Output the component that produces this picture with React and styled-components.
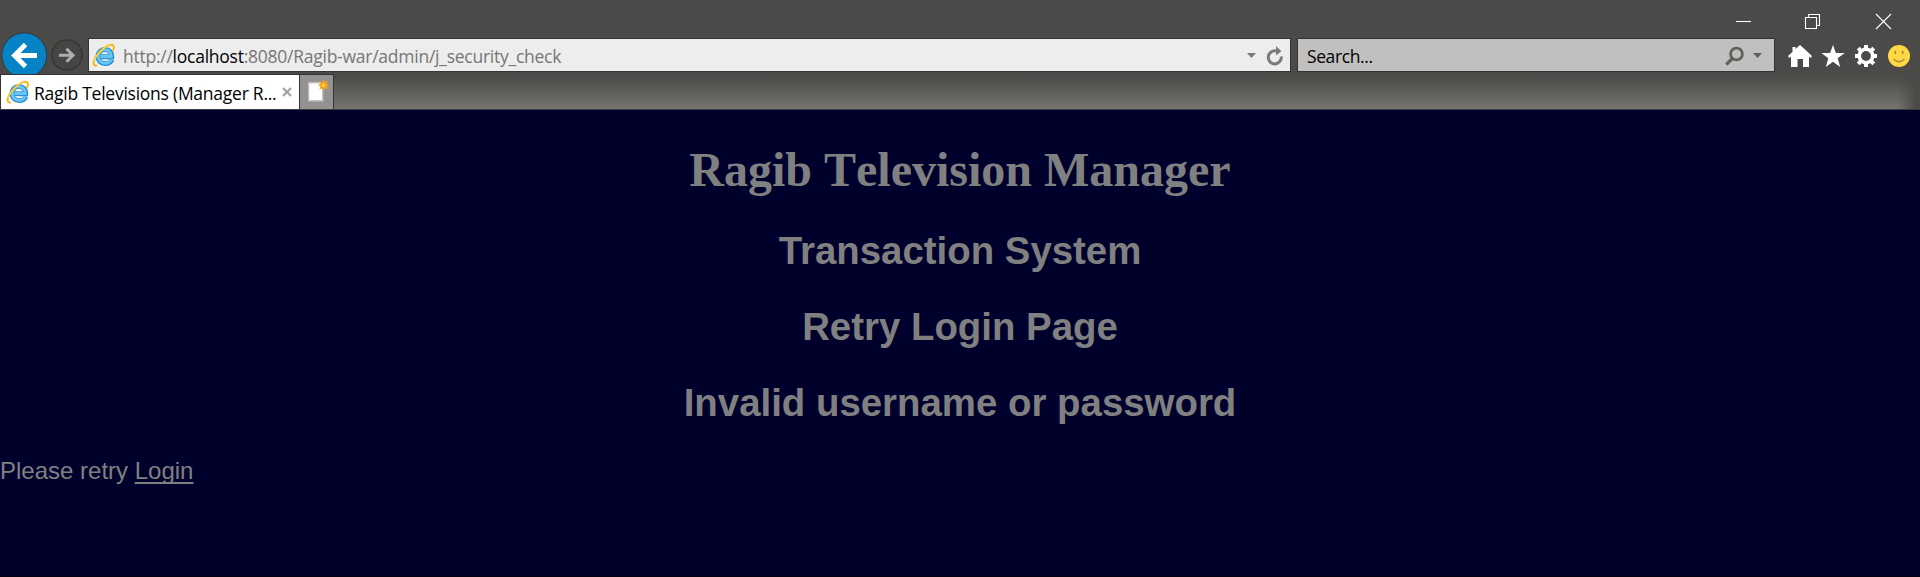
import React from "react";
import styled, { createGlobalStyle } from "styled-components";

const Global = createGlobalStyle`
  * { box-sizing: border-box; }
  html, body { margin: 0; padding: 0; background: #00002d; }
  body { overflow: hidden; }
  svg { display: block; flex: none; }
`;

const Browser = styled.div`
  display: flex;
  flex-direction: column;
  width: 1920px;
  height: 577px;
  background: #4c4a48;
  font-family: "Open Sans", "Noto Sans", sans-serif;
  font-size: 17.5px;
  letter-spacing: -0.25px;
  color: #000;
`;

const TitleBar = styled.header`
  display: flex;
  justify-content: flex-end;
  align-items: flex-start;
  height: 38px;
  padding: 13px 28px 0 0;
  gap: 52px;
`;

const WindowButton = styled.button`
  display: flex;
  width: 17px;
  height: 17px;
  margin-right: ${(p) => p.$gap || 0}px;
  padding: 0;
  border: 0;
  background: none;
`;

const NavBar = styled.div`
  display: flex;
  align-items: flex-start;
  height: 36px;
`;

const RoundButtons = styled.div`
  display: flex;
  align-items: center;
  gap: 4px;
  width: 88px;
  height: 46px;
  margin-top: -6px;
  padding-left: 1px;
`;

const Field = styled.div`
  display: flex;
  align-items: center;
  width: ${(p) => p.$width}px;
  height: 34px;
  margin-right: ${(p) => p.$gap}px;
  padding: 0 ${(p) => p.$right}px 0 ${(p) => p.$left}px;
  border: 1px solid #353432;
  background: ${(p) => p.$fill};
`;

const Url = styled.span`
  flex: 1;
  margin-left: 7px;
  padding-top: 2px;
  line-height: 30px;
  color: #767676;
  white-space: pre;
`;

const Host = styled.span`
  color: #000;
`;

const SearchHint = styled.span`
  flex: 1;
  padding-top: 2px;
  line-height: 30px;
  letter-spacing: -0.4px;
`;

const Tools = styled.div`
  display: flex;
  gap: 9px;
  padding-top: 7px;
`;

const TabRow = styled.div`
  position: relative;
  display: flex;
  height: 36px;
  border-bottom: 1px solid #3d3c3c;
  background:
    linear-gradient(90deg, transparent 1898px, #4c4a48 1916px),
    linear-gradient(180deg, #4c4a48 2px, #757370 34px);
`;

const Tab = styled.div`
  display: flex;
  align-items: center;
  width: 300px;
  padding: 0 7px 0 5px;
  border: 1px solid #353432;
  border-bottom: 0;
  background: #fff;
`;

const TabTitle = styled.span`
  flex: 1;
  margin-left: 4px;
  padding-top: 2px;
  line-height: 30px;
  white-space: nowrap;
`;

const NewTab = styled.button`
  display: flex;
  width: 34px;
  padding: 5px 0 0 6px;
  border: 1px solid #353432;
  border-width: 1px 1px 0 0;
  background: #939290;
`;

const Page = styled.main`
  flex: 1;
  background: #00002d;
  border-bottom: 1px solid #000012;
  color: #808080;
  font-family: "Liberation Sans", Arial, sans-serif;
  font-size: 24px;
  letter-spacing: 0;
`;

const Title = styled.h1`
  margin: 32px 0 0;
  font: bold 48px/55px "Liberation Serif", "Times New Roman", serif;
  font-kerning: none;
  text-align: center;
`;

const Subtitle = styled.h2`
  margin: 32px 0 0;
  font-size: 38.4px;
  line-height: 44px;
  text-align: center;
`;

const Notice = styled.p`
  margin: 32px 0 0;
  line-height: 28px;
`;

const LoginLink = styled.a`
  color: inherit;
  text-decoration: underline;
  text-decoration-skip-ink: none;
  text-decoration-thickness: 2px;
  text-underline-offset: 3px;
`;

const IeLogo = () => (
  <svg width="24" height="24" viewBox="0 0 24 24" fill="none">
    <path d="M20 16.500C18.600 19.500 16 20.600 12.900 20.600C8.900 20.600 6 17.600 6 13.600C6 9.600 8.900 6.400 12.900 6.400C17.200 6.400 19.900 9.400 19.700 13.800H8.500" stroke="#2b8fd3" strokeWidth="5" />
    <path d="M19.300 16.300C18 19 15.700 20.200 12.900 20.200C9.100 20.200 6.400 17.400 6.400 13.600C6.400 9.700 9.100 6.800 12.900 6.800C16.800 6.800 19.300 9.300 19.200 13.500H8.500" stroke="#66c5f2" strokeWidth="3" />
    <path d="M4.300 22.500C1.200 22.800 .8 19.500 3 15.300C6 9.500 13.500 2.500 19 1.700C22.300 1.300 22.500 4.200 21.200 7.300" stroke="#f5b91d" strokeWidth="2" strokeLinecap="round" />
    <path d="M2.100 18.500C3 13 11.500 3.800 18 2" stroke="#ffe36a" strokeWidth=".8" />
  </svg>
);

const Caret = ({ color }) => (
  <svg width="9" height="5" viewBox="0 0 9 5"><path d="M0 0h9L4.500 5z" fill={color} /></svg>
);

const BackIcon = () => (
  <svg width="46" height="46" viewBox="0 0 46 46" fill="none">
    <circle cx="23.300" cy="23.300" r="22.500" fill="#0683c6" stroke="#353432" />
    <path d="M36 23.500H14M24.500 12.500L13.500 23.500L24.500 34.500" stroke="#fff" strokeWidth="4.800" />
  </svg>
);

const ForwardIcon = () => (
  <svg width="32" height="32" viewBox="0 0 32 32" fill="none">
    <circle cx="16" cy="16" r="15.200" fill="#474543" stroke="#353432" strokeWidth="1.200" />
    <path d="M8 16.300H22M15.500 9.800L22 16.300L15.500 22.800" stroke="#aeadac" strokeWidth="3" />
  </svg>
);

const RefreshIcon = () => (
  <svg width="18" height="20" viewBox="0 0 18 20" fill="none">
    <path d="M10 5A6.500 6.500 0 1 0 15.200 10.500" stroke="#7a7a7a" strokeWidth="3" />
    <path d="M10 0L15.500 5.200L10 9.500z" fill="#7a7a7a" />
  </svg>
);

const SearchIcon = () => (
  <svg width="19" height="20" viewBox="0 0 19 20" fill="none" stroke="#62605e" strokeWidth="2.800">
    <circle cx="11.500" cy="8" r="5.900" />
    <path d="M7.300 12.500L1.300 18.500" strokeWidth="3.200" />
  </svg>
);

const HomeIcon = () => (
  <svg width="24" height="22" viewBox="0 0 24 22" fill="#fff">
    <path d="M12 0L16.500 4L24 11l-1.300 2L21 11.500V22h-6v-8H9.500v8H3V11.500L1.300 13L0 11L4.500 7V2h3v2z" />
  </svg>
);

const StarIcon = () => (
  <svg width="24" height="22" viewBox="0 0 24 22" fill="#fff">
    <path d="M12 0L14.900 8H23.700L16.700 13.300L19.200 22L12 16.800L4.800 22L7.300 13.300L.3 8H9.100z" />
  </svg>
);

const GearIcon = () => (
  <svg width="24" height="22" viewBox="0 0 24 22" fill="none" stroke="#fff">
    <circle cx="12" cy="11" r="6.700" strokeWidth="3.600" />
    <path d="M12 0v4M12 18v4M1 11h4M19 11h4M4.200 3.200l2.800 2.800M17 16l2.800 2.800M4.200 18.800L7 16M17 6l2.800-2.800" strokeWidth="4" />
  </svg>
);

const SmileIcon = () => (
  <svg width="24" height="22" viewBox="0 0 24 22" fill="none">
    <circle cx="12" cy="11" r="11" fill="#ffd944" />
    <path d="M8.300 5.800v3.200M15.700 5.800v3.200" stroke="#a98c3c" strokeWidth="1.600" />
    <path d="M6.500 14Q12 19.500 17.500 14" stroke="#a98c3c" strokeWidth="1.400" />
  </svg>
);

const NewTabIcon = () => (
  <svg width="26" height="24" viewBox="0 0 26 24">
    <path d="M2.700 2.700h14v18h-14z" fill="#fff" stroke="#c4c3c2" strokeWidth="1.400" />
    <path d="M17 0l1.300 2.800L21.500 1.500l-1.200 3L23 6l-2.700 1.300 1.200 3.200-3.200-1.300L17 12l-1.300-2.800-3.200 1.300 1.200-3.200L11 6l2.700-1.500-1.200-3 3.200 1.300z" fill="#f5a11c" transform="translate(1.500 -.500) scale(.950)" />
    <circle cx="17.600" cy="5.200" r="1.900" fill="#ffc84a" />
  </svg>
);

const CloseTabIcon = () => (
  <svg width="10" height="10" viewBox="0 0 10 10" stroke="#a3a3a3" strokeWidth="2.200">
    <path d="M1 1l8 8M9 1L1 9" />
  </svg>
);

const WindowGlyph = ({ d }) => (
  <svg width="17" height="17" viewBox="0 0 17 17" fill="none" stroke="#fff" strokeWidth="1.100"><path d={d} /></svg>
);

const FieldActions = styled.div`
  display: flex;
  align-items: center;
  gap: ${(p) => p.$gap}px;
  padding-top: 1px;
`;

export default function App() {
  return (
    <Browser>
      <Global />
      <TitleBar>
        <WindowButton><WindowGlyph d="M1 8.500h15" /></WindowButton>
        <WindowButton $gap={2}><WindowGlyph d="M1.500 4.500h11v11h-11zM4.500 4.500v-3h11v11h-3" /></WindowButton>
        <WindowButton><WindowGlyph d="M1 1l15 15M16 1L1 16" /></WindowButton>
      </TitleBar>
      <NavBar>
        <RoundButtons>
          <BackIcon />
          <ForwardIcon />
        </RoundButtons>
        <Field $width={1203} $gap={6} $left={3} $right={6} $fill="#ededed">
          <IeLogo />
          <Url>http://<Host>localhost</Host>:8080/Ragib-war/admin/j_security_check</Url>
          <FieldActions $gap={10}>
            <Caret color="#777" />
            <RefreshIcon />
          </FieldActions>
        </Field>
        <Field $width={478} $gap={13} $left={9} $right={12} $fill="#c1c0be">
          <SearchHint>Search...</SearchHint>
          <FieldActions $gap={9}>
            <SearchIcon />
            <Caret color="#62605e" />
          </FieldActions>
        </Field>
        <Tools>
          <HomeIcon />
          <StarIcon />
          <GearIcon />
          <SmileIcon />
        </Tools>
      </NavBar>
      <TabRow>
        <Tab>
          <IeLogo />
          <TabTitle>Ragib Televisions (Manager R...</TabTitle>
          <CloseTabIcon />
        </Tab>
        <NewTab><NewTabIcon /></NewTab>
      </TabRow>
      <Page>
        <Title>Ragib Television Manager</Title>
        <Subtitle>Transaction System</Subtitle>
        <Subtitle>Retry Login Page</Subtitle>
        <Subtitle>Invalid username or password</Subtitle>
        <Notice>Please retry <LoginLink>Login</LoginLink></Notice>
      </Page>
    </Browser>
  );
}
